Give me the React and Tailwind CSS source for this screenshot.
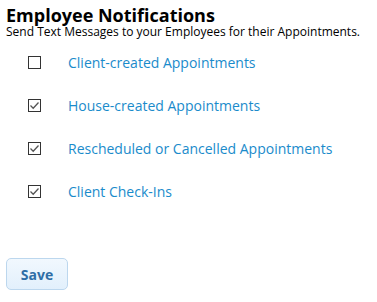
const rows = [
  { label: 'Client-created Appointments', checked: false },
  { label: 'House-created Appointments', checked: true },
  { label: 'Rescheduled or Cancelled Appointments', checked: true },
  { label: 'Client Check-Ins', checked: true },
]

function Box({ checked }) {
  return (
    <span className="w-[13px] h-[13px] border border-[#333] bg-white flex items-center justify-center shrink-0">
      {checked && (
        <svg width="11" height="11" viewBox="0 0 11 11">
          <path d="M1.5 5.5 L4.2 8.2 L9.5 2.5" fill="none" stroke="#555" strokeWidth="1.3" />
        </svg>
      )}
    </span>
  )
}

export default function App() {
  return (
    <div className="w-[377px] h-[302px] bg-white px-[6px] pt-[4px] font-['Open_Sans',sans-serif]">
      <h1 className="text-[18px] leading-[22px] font-bold text-black">Employee Notifications</h1>
      <p className="text-[12px] leading-[12px] text-black">Send Text Messages to your Employees for their Appointments.</p>

      <div className="mt-[18px] flex flex-col gap-[30px] pl-[22px]">
        {rows.map(r => (
          <label key={r.label} className="flex items-center h-[13px] cursor-pointer">
            <Box checked={r.checked} />
            <span className="ml-[27px] text-[14px] leading-[18px] text-[#1a8bcb]">{r.label}</span>
          </label>
        ))}
      </div>

      <button className="block mt-[60px] w-[62px] h-[32px] rounded-[5px] border border-[#bcd7ee] bg-gradient-to-b from-[#f1f8fe] to-[#e2f0fc] text-[14px] font-bold text-[#2f6ea6]">
        Save
      </button>
    </div>
  )
}
